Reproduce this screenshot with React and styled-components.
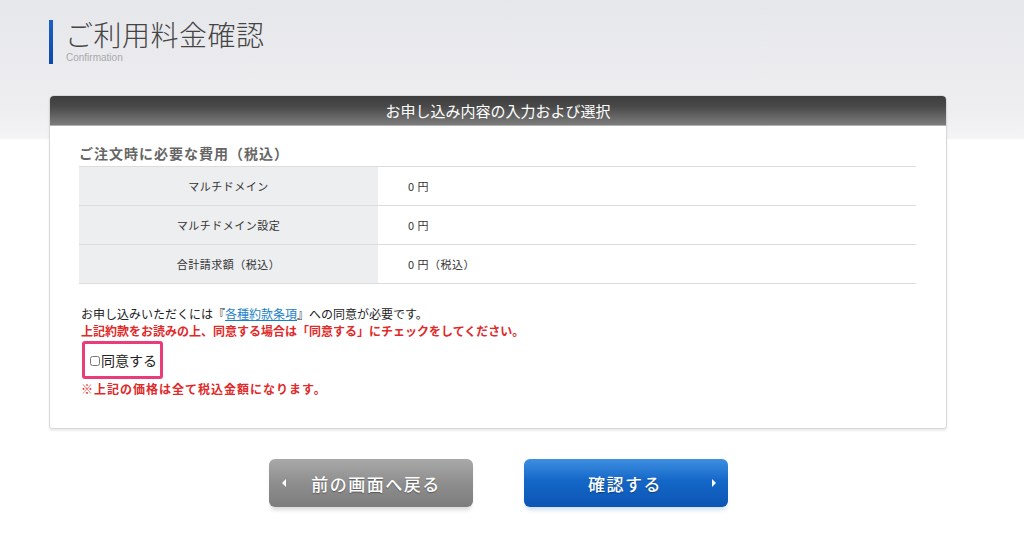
import React, { useState } from 'react';
import styled, { createGlobalStyle } from 'styled-components';

const GlobalStyle = createGlobalStyle`
  html, body {
    margin: 0;
    padding: 0;
    background: #fff;
  }
  body {
    font-family: "Noto Sans CJK JP", "Noto Sans", sans-serif;
    color: #333;
  }
`;

const Page = styled.div`
  width: 1024px;
  min-height: 543px;
  background: linear-gradient(to bottom, #e6e7ea 0px, #eeeef1 110px, #f4f4f6 138px, #ffffff 140px);
  padding-top: 18px;
  box-sizing: border-box;
  overflow: hidden;
`;

const Content = styled.div`
  width: 898px;
  margin-left: 49px;
`;

const TitleRow = styled.div`
  display: flex;
  align-items: flex-start;
  gap: 12px;
  height: 77px;
`;

const TitleBar = styled.div`
  width: 4px;
  height: 44px;
  margin-top: 2px;
  background: linear-gradient(to bottom, #1d5fc4, #0b4aa8);
`;

const TitleText = styled.div`
  display: flex;
  flex-direction: column;
`;

const Heading = styled.h1`
  margin: 0;
  font-size: 28px;
  line-height: 32px;
  font-weight: 300;
  color: #444;
  letter-spacing: 0.5px;
`;

const SubHeading = styled.span`
  font-family: "Liberation Sans", Arial, sans-serif;
  font-size: 10px;
  line-height: 12px;
  margin-top: 2px;
  color: #a8a8ac;
  margin-left: 1px;
`;

const Panel = styled.section`
  background: #fff;
  border-radius: 5px 5px 3px 3px;
  border: 1px solid #d8d8da;
  box-shadow: 0 2px 2px rgba(0, 0, 0, 0.08);
  overflow: hidden;
`;

const PanelHeader = styled.div`
  height: 29px;
  background: linear-gradient(to bottom, #3e3e3e 0%, #484848 35%, #7c7c7c 100%);
  border-bottom: 1px solid #b0b0b0;
  color: #fff;
  font-size: 15px;
  line-height: 29px;
  text-align: center;
`;

const PanelBody = styled.div`
  padding: 18px 30px 31px 29px;
`;

const SectionTitle = styled.h2`
  margin: 0 0 3px;
  font-size: 14px;
  line-height: 19px;
  font-weight: 700;
  color: #666;
  letter-spacing: 1px;
`;

const Table = styled.table`
  width: 100%;
  border-collapse: collapse;
  border-top: 1px solid #dcdcdc;
  font-size: 11px;
  letter-spacing: 0.5px;
`;

const Row = styled.tr`
  height: 39px;
  border-bottom: 1px solid #dcdcdc;
`;

const HeadCell = styled.th`
  width: 299px;
  background: #eceef0;
  font-weight: 400;
  color: #333;
  text-align: center;
  padding: 0;
`;

const ValueCell = styled.td`
  padding: 0 0 0 30px;
  color: #333;
`;

const Notice = styled.p`
  margin: ${(p) => p.$top || 0}px 0 0 2px;
  font-size: 12px;
  line-height: 17px;
  color: ${(p) => (p.$red ? '#e02a2a' : '#222')};
  font-weight: ${(p) => (p.$bold ? 700 : 400)};
  letter-spacing: ${(p) => p.$spacing || 0}px;
`;

const TermsLink = styled.a`
  color: #1a7fc8;
  text-decoration: underline;
`;

const AgreeBox = styled.label`
  display: inline-flex;
  align-items: center;
  margin: 2px 0 0 3px;
  padding: 0 3px 0 5px;
  height: 32px;
  border: 3px solid #ea3c78;
  border-radius: 3px;
  font-size: 14px;
  color: #222;
  cursor: pointer;
`;

const Check = styled.input`
  width: 10px;
  height: 10px;
  margin: 2px 1px 0 0;
`;

const Buttons = styled.div`
  display: flex;
  justify-content: center;
  gap: 51px;
  margin-top: 30px;
  padding-left: 1px;
`;

const ActionButton = styled.button`
  position: relative;
  width: 204px;
  height: 48px;
  border: none;
  border-radius: 6px;
  font-family: inherit;
  font-size: 17px;
  font-weight: 500;
  color: #fff;
  letter-spacing: 1.5px;
  text-shadow: 0 1px 1px rgba(0, 0, 0, 0.35);
  cursor: pointer;
  background: ${(p) =>
    p.$primary
      ? 'linear-gradient(to bottom, #3d8fe0 0%, #1467c8 45%, #0c55b4 100%)'
      : 'linear-gradient(to bottom, #a9a9a9 0%, #8e8e8e 50%, #7d7d7d 100%)'};
  box-shadow: 0 5px 4px -2px ${(p) => (p.$primary ? 'rgba(70, 130, 200, 0.25)' : 'rgba(0, 0, 0, 0.15)')};
  padding: ${(p) => (p.$primary ? '0 2px 0 0' : '0 0 0 10px')};
`;

const Arrow = styled.span`
  position: absolute;
  top: 50%;
  ${(p) => (p.$right ? 'right: 12px;' : 'left: 13px;')}
  margin-top: -4px;
  width: 0;
  height: 0;
  border-top: 4px solid transparent;
  border-bottom: 4px solid transparent;
  ${(p) => (p.$right ? 'border-left: 4px solid #fff;' : 'border-right: 4px solid #fff;')}
`;

const rows = [
  ['マルチドメイン', '0 円'],
  ['マルチドメイン設定', '0 円'],
  ['合計請求額（税込）', '0 円（税込）'],
];

export default function App() {
  const [agreed, setAgreed] = useState(false);

  return (
    <Page>
      <GlobalStyle />
      <Content>
        <TitleRow>
          <TitleBar />
          <TitleText>
            <Heading>ご利用料金確認</Heading>
            <SubHeading>Confirmation</SubHeading>
          </TitleText>
        </TitleRow>

        <Panel>
          <PanelHeader>お申し込み内容の入力および選択</PanelHeader>
          <PanelBody>
            <SectionTitle>ご注文時に必要な費用（税込）</SectionTitle>
            <Table>
              <tbody>
                {rows.map(([label, value]) => (
                  <Row key={label}>
                    <HeadCell>{label}</HeadCell>
                    <ValueCell>{value}</ValueCell>
                  </Row>
                ))}
              </tbody>
            </Table>

            <Notice $top={21}>
              お申し込みいただくには『<TermsLink href="#">各種約款条項</TermsLink>』への同意が必要です。
            </Notice>
            <Notice $red $bold>
              上記約款をお読みの上、同意する場合は「同意する」にチェックをしてください。
            </Notice>
            <AgreeBox>
              <Check type="checkbox" checked={agreed} onChange={(e) => setAgreed(e.target.checked)} />
              同意する
            </AgreeBox>
            <Notice $red $bold $top={1} $spacing={1}>
              ※上記の価格は全て税込金額になります。
            </Notice>
          </PanelBody>
        </Panel>

        <Buttons>
          <ActionButton type="button">
            <Arrow />
            前の画面へ戻る
          </ActionButton>
          <ActionButton type="button" $primary>
            確認する
            <Arrow $right />
          </ActionButton>
        </Buttons>
      </Content>
    </Page>
  );
}
